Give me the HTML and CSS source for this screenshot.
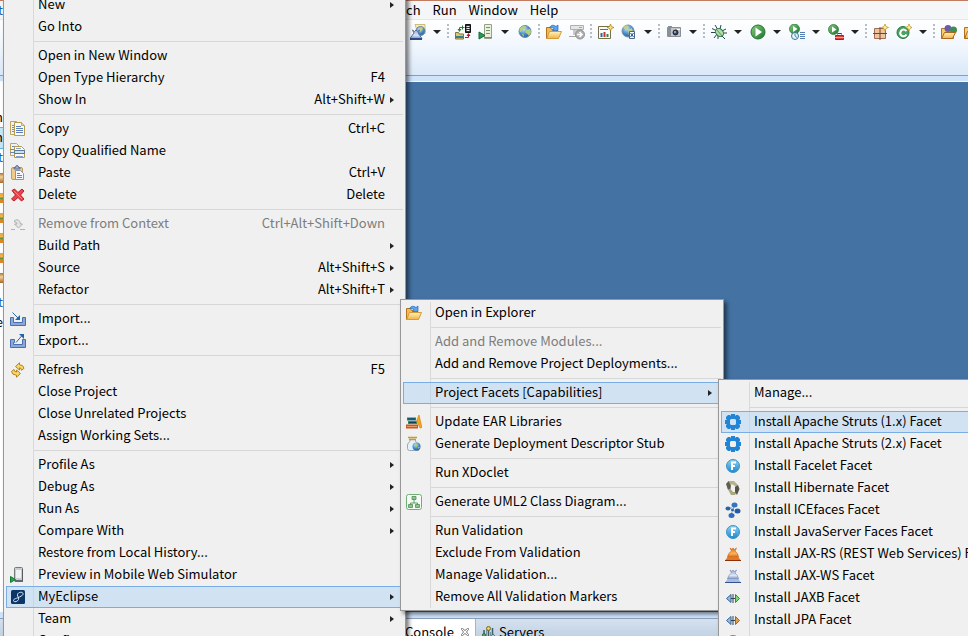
FILE: index.html
```html
<!DOCTYPE html>
<html lang="en">
<head>
<meta charset="utf-8">
<title>MyEclipse</title>
<link rel="stylesheet" href="styles.css">
</head>
<body>
<svg class="defs" aria-hidden="true">
  <defs>
    <linearGradient id="gold" x1="0" y1="0" x2="0" y2="1"><stop offset="0" stop-color="#fff3c0"/><stop offset="1" stop-color="#f2b240"/></linearGradient>
    <linearGradient id="ball" x1="0" y1="0" x2="0" y2="1"><stop offset="0" stop-color="#8ed4f3"/><stop offset="1" stop-color="#1c87cc"/></linearGradient>
    <radialGradient id="sea" cx=".4" cy=".3" r=".8"><stop offset="0" stop-color="#c5e5fa"/><stop offset=".5" stop-color="#4a93cf"/><stop offset="1" stop-color="#1d4f94"/></radialGradient>
    <linearGradient id="fire" x1="0" y1="0" x2="0" y2="1"><stop offset="0" stop-color="#d9701c"/><stop offset=".6" stop-color="#f9b65a"/><stop offset="1" stop-color="#d9701c"/></linearGradient>
    <linearGradient id="ice" x1="0" y1="0" x2="0" y2="1"><stop offset="0" stop-color="#8da3d0"/><stop offset=".6" stop-color="#dde7f6"/><stop offset="1" stop-color="#7f95c8"/></linearGradient>
    <linearGradient id="leaf" x1="0" y1="0" x2="1" y2="1"><stop offset="0" stop-color="#8acb80"/><stop offset="1" stop-color="#16762a"/></linearGradient>
    <symbol id="copy" viewBox="0 0 16 16"><path d="M.5.5h6l3 3v10h-9z" fill="#eef2f8" stroke="#bda65a"/><path d="M2 4.500h3M2 6.500h3M2 8.500h3M2 10.500h3" stroke="#7390c0"/><path d="M4.500 1.500h7l3 3v10h-10z" fill="#f8fafd" stroke="#b39a4d"/><path d="M11.500 1.500v3h3" fill="#e9d78f" stroke="#c4aa55"/><path d="M6 5.500h5M6 7.500h7M6 9.500h7M6 11.500h7" stroke="#5f7fb8"/></symbol>
    <symbol id="copyname" viewBox="0 0 16 16"><path d="M.5.500h6l3 3v9h-9z" fill="#eef2f8" stroke="#bda65a"/><path d="M2 3.500h4M0 6.500h9M0 9.500h9" stroke="#6e8aa8"/><path d="M4.500 3.500h7l3 3v8h-10z" fill="#f8fafd" stroke="#b39a4d"/><path d="M6 5.500h5M6 13.500h7" stroke="#8aa2c9"/><path d="M4.500 7.500h10v3h-10z" fill="#cde0f5" stroke="#5c7894"/></symbol>
    <symbol id="paste" viewBox="0 0 16 16"><rect x="1.500" y="2.500" width="11" height="12" rx="1.500" fill="#f0cb8c" stroke="#c99656"/><path d="M4 4V2.500h1.500Q5.500.500 7 .500t1.500 2H10V4z" fill="#9fb0c8" stroke="#5c718f"/><path d="M5.500 5.500h5l3 3v6h-8z" fill="#f7f9fd" stroke="#8896ad"/><path d="M7 8.500h3M7 10.500h5M7 12.500h5" stroke="#6583bb"/></symbol>
    <symbol id="delete" viewBox="0 0 16 16"><path d="M2 3.500 4.500 2 8 5.500 12 2l2 2-3.500 4 3.500 4-2.500 2L8 10.500 4 14l-2.500-2L5.500 8z" fill="#e8444a" stroke="#bd1c28" stroke-linejoin="round"/><path d="m4 4 8 8" stroke="#f7898a"/></symbol>
    <symbol id="removectx" viewBox="0 0 16 16"><path d="M1 13.500h4M10 13.500h5" stroke="#b2b2b2"/><path d="M4.500 4.500q5-2.500 6 3.500h2L8.500 12 4.500 8h2.500Q7 6 4.500 6z" fill="#e4e4e4" stroke="#b0b0b0"/></symbol>
    <symbol id="import" viewBox="0 0 16 16"><path d="M.5 6.500h3v5h9v-5h3v8H.5z" fill="#8aa9d8" stroke="#4a6fb0"/><path d="m2.500 1.500 6 6" stroke="#2a63a8" fill="none"/><path d="M10 4v5H5z" fill="#1d66a8"/></symbol>
    <symbol id="export" viewBox="0 0 16 16"><path d="M4.500 6.500h-4v8h15v-8h-3v5h-9v-2h1z" fill="#8aa9d8" stroke="#4a6fb0"/><path d="m6 9.500 6-7" stroke="#2a63a8" fill="none"/><path d="M9 1h5v5z" fill="#1d66a8"/></symbol>
    <symbol id="refresh" viewBox="0 0 16 16"><path d="M5.500 4.500 9.500.800v2q4 0 4.500 3.500l-2.500 2q0-2.500-2-2.500V8zM10.500 11.500l-4 3.700v-2Q2 13 1.500 9.500l2.500-2q.300 2.500 2.500 2.500V8z" fill="#f8d76c" stroke="#b5831c" stroke-linejoin="round"/></symbol>
    <symbol id="mobile" viewBox="0 0 16 16"><rect x="4.500" y=".5" width="8" height="14" rx="1" fill="#c9cdd0" stroke="#74797d"/><path d="M6 3h5v8H6z" fill="#f0f2f3"/><path d="M12.500 2v12" stroke="#565b60"/><path d="M5 13h8v2H5z" fill="#63686c"/><path d="m.5 9.500 5 3-5 3z" fill="#2ba04d" stroke="#157a34"/></symbol>
    <symbol id="myeclipse" viewBox="0 0 16 16"><rect x="1" y="1" width="14" height="14" rx="1.500" fill="#0b3667"/><path d="M13 4.500C12.500 2.500 8 3 7.500 5.500S9.500 8 8.500 10.500 3.500 13.500 3.500 11.500 7 9.500 9.500 8 13.500 6 13 4.500" fill="none" stroke="#dfe9f3"/></symbol>
    <symbol id="openfolder" viewBox="0 0 16 16"><path d="M.5 3.500h4l1 2h6v9H.5z" fill="#f0ba57" stroke="#b2731c"/><path d="M3.500 7.500h12l-3 7H.7z" fill="url(#gold)" stroke="#d99a35"/><path d="M3.500 3.500Q6-.5 10 2.500L12 1v5.500H6.500l1.500-2Q6 3 3.500 3.500z" fill="#5aa4ec" stroke="#2569bd" stroke-width=".7"/></symbol>
    <symbol id="books" viewBox="0 0 16 16"><path d="M1 3.500h9v3H1z" fill="#1f7a8c"/><path d="M2 7h9v3H2z" fill="#2c8f5b"/><path d="M0 10.500h12v4H0z" fill="#c75a24"/><path d="M2 5h7M3 8.500h7" stroke="#143f52"/><path d="M1 12.500h10" stroke="#e59a68"/><path d="m10.500 7 2.500-6 3 12.500-2 .5z" fill="#f3a51c" stroke="#d17c0b" stroke-width=".6"/></symbol>
    <symbol id="jar" viewBox="0 0 16 16"><path d="M4 3.500h5.500v2Q12.500 7 12.500 9v5.500h-9q-2 0-2-2V9Q1.500 7 4 5.500z" fill="#e7f1fa" stroke="#92aac4"/><path d="M2 1.500h9M3 3.500h7" stroke="#c79a2a" stroke-width="1.500"/><circle cx="10.500" cy="10.500" r="4" fill="url(#sea)"/><path d="m8.500 9 2.500-1.500.5 2-1.500 2zM12 11h2l-1.500 2z" fill="#b3c767"/></symbol>
    <symbol id="uml" viewBox="0 0 16 16"><rect x=".5" y=".5" width="15" height="15" rx="2" fill="#f5faf4" stroke="#72ad78"/><path d="M8 5v4M4.500 11V9h7v2" fill="none" stroke="#5b9e62"/><path d="M6 2.500h4v3H6zM2.500 10.500h4v3h-4zM9.500 10.500h4v3h-4z" fill="#8cc393" stroke="#4c9154" stroke-width=".8"/></symbol>
    <symbol id="gear" viewBox="0 0 16 16"><path fill-rule="evenodd" d="M3 1h2l1 1V0h4v2l1-1h2l2 2v2l-1 1h2v4h-2l1 1v2l-2 2h-2l-1-1v2H6v-2l-1 1H3l-2-2v-2l1-1H0V6h2L1 5V3zM6 5 5 6v4l1 1h4l1-1V6l-1-1z" fill="#2284d4"/></symbol>
    <symbol id="fball" viewBox="0 0 16 16"><circle cx="8" cy="8" r="6.500" fill="url(#ball)" stroke="#3c92c8"/><path d="M6 4.500h5M7 4v8M6 8h4" stroke="#fff" stroke-width="2" fill="none"/></symbol>
    <symbol id="hibernate" viewBox="0 0 16 16"><path d="M3.500 1H9l4 4-2 2-3-2.500H5z" fill="#b5b18a"/><path d="m1 4 2.500-3L6 5.500 5.500 9 3 10z" fill="#605d53"/><path d="m3 9.500 2.500-.500L8 12h4l-2 3H6z" fill="#aaa67e"/><path d="m10 7 3-2 1.500 4-2.500 6-2-3z" fill="#55534a"/></symbol>
    <symbol id="icefaces" viewBox="0 0 16 16"><path d="M3 6h4M9 3l-.5 4M10 8h4M6 13l1-3" stroke="#7ba4d4"/><ellipse cx="3" cy="6.500" rx="2.500" ry="2" fill="#2b62a8"/><ellipse cx="9.500" cy="3" rx="3" ry="2.500" fill="#3474bf"/><circle cx="7.500" cy="8" r="1.500" fill="#2b62a8"/><ellipse cx="12.500" cy="9" rx="3" ry="2.500" fill="#245ba5"/><ellipse cx="6.500" cy="13.500" rx="3" ry="2.500" fill="#2f6dba"/></symbol>
    <symbol id="bagfire" viewBox="0 0 16 16"><path d="m5 2 2 1.500L8 2l1.500 1.500L11.500 2 10 5q3 2 3.500 6h-11Q3 7 6.500 5z" fill="url(#fire)" stroke="#c65f18" stroke-width=".6"/><path d="M.5 14 2.500 11h11l2 3z" fill="#e07a26"/><path d="M0 14.500h16" stroke="#8d2f08"/></symbol>
    <symbol id="bagice" viewBox="0 0 16 16"><path d="m5 2 2 1.500L8 2l1.500 1.500L11.500 2 10 5q3 2 3.500 6h-11Q3 7 6.500 5z" fill="url(#ice)" stroke="#7488b5" stroke-width=".6"/><path d="M.5 14 2.500 11h11l2 3z" fill="#a9bbdf"/><path d="M0 14.500h16" stroke="#33518f"/></symbol>
    <symbol id="jaxb" viewBox="0 0 16 16"><path d="M6 4.500v8l-4.500-4z" fill="#8fbbe8" stroke="#3f6493"/><path d="M8 4v9M6 8.500h5" stroke="#33424f"/><path d="M10.500 4.500v8l4-4z" fill="#7bd874" stroke="#2a9134"/></symbol>
    <symbol id="jpa" viewBox="0 0 16 16"><path d="M6 4.500v8l-4.500-4z" fill="#8fbbe8" stroke="#3f6493"/><path d="M8 4v9M6 8.500h5" stroke="#33424f"/><path d="M10.500 4.500v8l4-4z" fill="#e0a050" stroke="#a8651c"/></symbol>
    <symbol id="globe" viewBox="0 0 16 16"><circle cx="8" cy="7.500" r="6" fill="url(#sea)" stroke="#6b8fae"/><path d="m3 4 4-2.500 2 1L7.500 5 5 6 4 8.500 2.500 7zM9 6l4-1 1 3-2 4-2-2.500L8.500 9zM4.500 9 7 11l-.5 2z" fill="#b9cf7a"/></symbol>
    <symbol id="globejar" viewBox="0 0 16 16"><path d="M5 .5h10v9H8z" fill="#f6ecc0" stroke="#c4ad5c" stroke-width=".8"/><circle cx="10.500" cy="7" r="4.500" fill="url(#sea)" stroke="#6c88a4"/><path d="m9 4 3-1 1 2-3 3z" fill="#c5cf7a"/><path d="m2.500 6 2 1.500L6 6l1.500 1.500L9.500 6 8 9l4 5.500H0L4 9z" fill="url(#ice)" stroke="#56719f"/><path d="M0 15h12" stroke="#284c83" stroke-width="2"/></symbol>
    <symbol id="deploy" viewBox="0 0 16 16"><path d="M10.500.5h5v8h-5z" fill="#333" stroke="#111"/><path d="M11.500 2.500h3M11.500 4.500h3M11.500 6.500h3" stroke="#eee"/><path d="M4.500 6V3.500h5M7.500 1.500v4" stroke="#2f7d37" fill="none"/><path d="M2.500 5h4L4.500 8z" fill="#2f7d37"/><path d="M.5 8.500h3l1 1.500h4v5h-8z" fill="#e2c568" stroke="#7d7742"/><path d="M0 13h8" stroke="#347e8d" stroke-width="2"/><path d="M10 13.500h3.500V11" stroke="#ab1d24" fill="none"/><path d="m13.500 9 2 3h-4z" fill="#ab1d24"/></symbol>
    <symbol id="runserver" viewBox="0 0 16 16"><path d="M6.500.5h7v14h-7z" fill="#ecefda" stroke="#96a28a"/><path d="M8 3.500h4M8 6.500h4M8 9.500h4M6 13.500h8" stroke="#6f9670"/><path d="m1 8 6 3.500-6 3.500z" fill="#2a9a52" stroke="#166c33"/></symbol>
    <symbol id="serverarrow" viewBox="0 0 16 16"><path d="M1.500 1.500h13v4h-13z" fill="#e6e6e6" stroke="#b0b0b0"/><path d="M4 6h9v5H4z" fill="#c9c9c9"/><path d="M0 12.500h8M10 3.500h3" stroke="#a5a5a5"/><circle cx="11" cy="10.500" r="4.500" fill="#b0b0b0" stroke="#909090"/><path d="M8 10.500h5M10.500 8l2.500 2.500-2.500 2.500" stroke="#fff" fill="none" stroke-width="1.500"/></symbol>
    <symbol id="report" viewBox="0 0 16 16"><path d="M.5 2.500h12v12H.5z" fill="#f8fbfd" stroke="#766f46"/><path d="M2 5.500h8" stroke="#437c83"/><path d="M3.500 9v4" stroke="#2b68a4" stroke-width="2"/><path d="M6.500 8v5" stroke="#c0392b" stroke-width="2"/><path d="M9.500 10v3" stroke="#27894b" stroke-width="2"/><path d="m12.500 0 1 2.500L16 3.500l-2.500 1-1 2.500-1-2.500L9 3.500l2.500-1z" fill="#f8df8a" stroke="#a77c10" stroke-width=".7"/></symbol>
    <symbol id="globedoc" viewBox="0 0 16 16"><circle cx="7" cy="7" r="6" fill="url(#sea)" stroke="#7592ad"/><path d="m2 3 4-2 2 2-3 3zM7 6l4-2 1 4-4 4z" fill="#c7cf86"/><path d="M8.500 7.500h5v7h-5z" fill="#f4f8fc" stroke="#4d6688"/><path d="m9.500 9 3 4M12.500 9l-3 4" stroke="#284f87"/></symbol>
    <symbol id="camera" viewBox="0 0 16 16"><path d="M1.500 3.500h13v9h-13z" fill="#c2c6cb" stroke="#8b9096"/><path d="M2 2h4v2H2zM2 4h3v8H2z" fill="#8a9097"/><path d="M11 5.500h3" stroke="#f3f3f3"/><circle cx="9.500" cy="8.500" r="2.500" fill="#2c4a72" stroke="#222"/><circle cx="9" cy="8" r="1" fill="#8fc0ee"/></symbol>
    <symbol id="bug" viewBox="0 0 16 16"><path d="M1 4.500l4 2M4 1l2.500 4M10 1 9 5M0 8.500h5M3 14l3-4M7 15v-3M11 7l4-2M12 9h4M11 12l3 3" stroke="#27474b" fill="none"/><ellipse cx="8.500" cy="8.500" rx="3.500" ry="4.500" transform="rotate(-42 8.500 8.500)" fill="#b5dba0" stroke="#287457"/><path d="m6 6 5 6" stroke="#4c966b"/></symbol>
    <symbol id="run" viewBox="0 0 16 16"><circle cx="8" cy="8" r="7" fill="url(#leaf)" stroke="#1d7330"/><path d="m5.500 3.500 6.500 4.500-6.500 4.500z" fill="#fff"/></symbol>
    <symbol id="runhist" viewBox="0 0 16 16"><circle cx="5.500" cy="5" r="5" fill="url(#leaf)" stroke="#1d7330" stroke-width=".7"/><path d="m4 2 4.500 3L4 8z" fill="#fff"/><circle cx="6" cy="12" r="3.500" fill="#e9f5fc" stroke="#2f7898"/><path d="M6 9.500V12l2 1.500M11 8.500h5M11 10.500h5M11 12.500h5M11 14.500h5" stroke="#557fb3" fill="none"/></symbol>
    <symbol id="runext" viewBox="0 0 16 16"><circle cx="5.500" cy="5.500" r="5" fill="url(#leaf)" stroke="#1d7330" stroke-width=".7"/><path d="m4 2.500 4.500 3L4 8.500z" fill="#fff"/><path d="M9.500 10.500V9.500h4v1" stroke="#9a2320" fill="none"/><path d="M7.500 11.500h8v4h-8z" fill="#e0443c" stroke="#a31f1b"/><path d="M7 13.500h9" stroke="#f8a19a"/></symbol>
    <symbol id="pkg" viewBox="0 0 16 16"><path d="M1.500 4.500h11v10h-11z" fill="#e9c6a0" stroke="#a46c4e"/><path d="M7 3v13M0 9.500h14" stroke="#7e4029"/><path d="m12 0 1 2.500L15.500 3.500 13 4.500 12 7l-1-2.500-2.500-1 2.500-1z" fill="#fff2a8" stroke="#bb9014" stroke-width=".7"/></symbol>
    <symbol id="class" viewBox="0 0 16 16"><circle cx="7" cy="8.500" r="6" fill="#4ba263" stroke="#257b3e"/><path d="M10.500 7Q7 4 5 7t1 5q3 1 4.500-1.500" stroke="#fff" stroke-width="2" fill="none"/><path d="m13 0 1 2.500 2 1-2 1L13 7l-1-2.500-2.500-1 2.500-1z" fill="#fff2a8" stroke="#bb9014" stroke-width=".7"/></symbol>
    <symbol id="types" viewBox="0 0 16 16"><path d="M.5 4.500h4l1 2h7v8H.5z" fill="#f4cd72" stroke="#b2731c"/><circle cx="7" cy="4.500" r="3.500" fill="#6c5ba8"/><circle cx="12.500" cy="6" r="3.500" fill="#3d8f51"/><path d="M3.500 8.500h11l-3 6H.7z" fill="url(#gold)" stroke="#a9681b"/></symbol>
    <symbol id="folder" viewBox="0 0 16 16"><path d="M.5 3.500h5l1 2h6v9H.5z" fill="#f4cd72" stroke="#b2731c"/><path d="M3.500 7.500h12l-3 7H.7z" fill="url(#gold)" stroke="#a9681b"/></symbol>
    <symbol id="servers" viewBox="0 0 16 16"><path d="M3 6v8M7.500 3v9M11.500 4v10" stroke="#36606c" stroke-width="1.500"/><path d="M5.500 6v8M9.500 8v6" stroke="#7993a3"/><circle cx="3" cy="11" r="1.500" fill="#6bb35e" stroke="#2e6a35"/><circle cx="7.500" cy="4.500" r="2" fill="#f1cf52" stroke="#81651d"/><circle cx="12" cy="12" r="1.500" fill="#d5e4ef" stroke="#4e6f88"/></symbol>
  </defs>
</svg>

<div class="workbench">
  <nav class="menubar" aria-label="Main menu">
    <span class="peek peek-blue">t</span>
    <button>ch</button><button>Run</button><button>Window</button><button>Help</button>
  </nav>
  <div class="toolbar">
    <button class="tool" aria-label="Web service"><svg><use href="#globejar"/></svg></button><button class="drop" aria-label="More"></button><i class="grip"></i>
    <button class="tool" aria-label="Deploy"><svg><use href="#deploy"/></svg></button>
    <button class="tool" aria-label="Run server"><svg><use href="#runserver"/></svg></button><button class="drop" aria-label="More"></button>
    <button class="tool" aria-label="Browser"><svg><use href="#globe"/></svg></button><i class="grip"></i>
    <button class="tool" aria-label="Open in Explorer"><svg><use href="#openfolder"/></svg></button>
    <button class="tool" aria-label="Server"><svg><use href="#serverarrow"/></svg></button><i class="grip"></i>
    <button class="tool" aria-label="New report"><svg><use href="#report"/></svg></button>
    <button class="tool" aria-label="Web page"><svg><use href="#globedoc"/></svg></button><button class="drop" aria-label="More"></button><i class="grip"></i>
    <button class="tool" aria-label="Snapshot"><svg><use href="#camera"/></svg></button><button class="drop" aria-label="More"></button><i class="grip"></i>
    <button class="tool" aria-label="Debug"><svg><use href="#bug"/></svg></button><button class="drop" aria-label="More"></button>
    <button class="tool" aria-label="Run"><svg><use href="#run"/></svg></button><button class="drop" aria-label="More"></button>
    <button class="tool" aria-label="Run history"><svg><use href="#runhist"/></svg></button><button class="drop" aria-label="More"></button>
    <button class="tool" aria-label="External tools"><svg><use href="#runext"/></svg></button><button class="drop" aria-label="More"></button><i class="grip"></i>
    <button class="tool" aria-label="New package"><svg><use href="#pkg"/></svg></button>
    <button class="tool" aria-label="New class"><svg><use href="#class"/></svg></button><button class="drop" aria-label="More"></button><i class="grip"></i>
    <button class="tool" aria-label="Open type"><svg><use href="#types"/></svg></button>
    <button class="tool" aria-label="Open folder"><svg><use href="#folder"/></svg></button>
  </div>
  <div class="main">
    <div class="explorer">
      <span class="peek">n</span><span class="peek peek-on">n</span><span class="peek peek-blue">t</span>
      <i class="chip chip-pkg"></i><i class="chip"></i><i class="chip"></i><i class="chip"></i><i class="chip"></i><i class="chip chip-pkg"></i>
      <span class="peek peek-blue">t</span><span class="peek">e</span>
    </div>
    <div class="editor"></div>
  </div>
  <div class="panel">
    <div class="tab tab-on">Console <svg class="close" viewBox="0 0 10 10"><path d="M1.500 1.500h1l2.500 2 2.500-2h1v1l-2 2.500 2 2.500v1h-1L5 6.500l-2.500 2h-1v-1l2-2.500-2-2.500z" fill="#fff" stroke="#777"/></svg></div>
    <div class="tab"><svg><use href="#servers"/></svg>Servers</div>
  </div>
</div>

<ul class="menu menu-context">
  <li><button>New<i class="more"></i></button></li>
  <li><button>Go Into</button></li>
  <li class="line"></li>
  <li><button>Open in New Window</button></li>
  <li><button>Open Type Hierarchy<kbd>F4</kbd></button></li>
  <li><button>Show In<kbd>Alt+Shift+W</kbd><i class="more"></i></button></li>
  <li class="line"></li>
  <li><button><svg><use href="#copy"/></svg>Copy<kbd>Ctrl+C</kbd></button></li>
  <li><button><svg><use href="#copyname"/></svg>Copy Qualified Name</button></li>
  <li><button><svg><use href="#paste"/></svg>Paste<kbd>Ctrl+V</kbd></button></li>
  <li><button><svg><use href="#delete"/></svg>Delete<kbd>Delete</kbd></button></li>
  <li class="line"></li>
  <li><button disabled><svg><use href="#removectx"/></svg>Remove from Context<kbd>Ctrl+Alt+Shift+Down</kbd></button></li>
  <li><button>Build Path<i class="more"></i></button></li>
  <li><button>Source<kbd>Alt+Shift+S</kbd><i class="more"></i></button></li>
  <li><button>Refactor<kbd>Alt+Shift+T</kbd><i class="more"></i></button></li>
  <li class="line"></li>
  <li><button><svg><use href="#import"/></svg>Import...</button></li>
  <li><button><svg><use href="#export"/></svg>Export...</button></li>
  <li class="line"></li>
  <li><button><svg><use href="#refresh"/></svg>Refresh<kbd>F5</kbd></button></li>
  <li><button>Close Project</button></li>
  <li><button>Close Unrelated Projects</button></li>
  <li><button>Assign Working Sets...</button></li>
  <li class="line"></li>
  <li><button>Profile As<i class="more"></i></button></li>
  <li><button>Debug As<i class="more"></i></button></li>
  <li><button>Run As<i class="more"></i></button></li>
  <li><button>Compare With<i class="more"></i></button></li>
  <li><button>Restore from Local History...</button></li>
  <li><button><svg><use href="#mobile"/></svg>Preview in Mobile Web Simulator</button></li>
  <li><button class="on"><svg><use href="#myeclipse"/></svg>MyEclipse<i class="more"></i></button></li>
  <li><button>Team<i class="more"></i></button></li>
  <li><button>Configure</button></li>
</ul>

<ul class="menu menu-myeclipse">
  <li><button><svg><use href="#openfolder"/></svg>Open in Explorer</button></li>
  <li class="line"></li>
  <li><button disabled>Add and Remove Modules...</button></li>
  <li><button>Add and Remove Project Deployments...</button></li>
  <li class="line"></li>
  <li><button class="on">Project Facets [Capabilities]<i class="more"></i></button></li>
  <li class="line"></li>
  <li><button><svg><use href="#books"/></svg>Update EAR Libraries</button></li>
  <li><button><svg><use href="#jar"/></svg>Generate Deployment Descriptor Stub</button></li>
  <li class="line"></li>
  <li><button>Run XDoclet</button></li>
  <li class="line"></li>
  <li><button><svg><use href="#uml"/></svg>Generate UML2 Class Diagram...</button></li>
  <li class="line"></li>
  <li><button>Run Validation</button></li>
  <li><button>Exclude From Validation</button></li>
  <li><button>Manage Validation...</button></li>
  <li><button>Remove All Validation Markers</button></li>
</ul>

<ul class="menu menu-facets">
  <li><button>Manage...</button></li>
  <li class="line"></li>
  <li><button class="on"><svg><use href="#gear"/></svg>Install Apache Struts (1.x) Facet</button></li>
  <li><button><svg><use href="#gear"/></svg>Install Apache Struts (2.x) Facet</button></li>
  <li><button><svg><use href="#fball"/></svg>Install Facelet Facet</button></li>
  <li><button><svg><use href="#hibernate"/></svg>Install Hibernate Facet</button></li>
  <li><button><svg><use href="#icefaces"/></svg>Install ICEfaces Facet</button></li>
  <li><button><svg><use href="#fball"/></svg>Install JavaServer Faces Facet</button></li>
  <li><button><svg><use href="#bagfire"/></svg>Install JAX-RS (REST Web Services) Facet</button></li>
  <li><button><svg><use href="#bagice"/></svg>Install JAX-WS Facet</button></li>
  <li><button><svg><use href="#jaxb"/></svg>Install JAXB Facet</button></li>
  <li><button><svg><use href="#jpa"/></svg>Install JPA Facet</button></li>
  <li><button aria-label="Install facet"><svg><use href="#fball"/></svg></button></li>
</ul>
</body>
</html>
```
FILE: styles.css
```css
* { box-sizing: border-box; }
html, body { height: 100%; overflow: hidden; }
body {
  margin: 0;
  position: relative;
  font: 13px/20px "Noto Sans CJK SC", "Noto Sans", sans-serif;
  color: #000;
}
button { font: inherit; color: inherit; background: none; border: 0; padding: 0; }
svg { width: 16px; height: 16px; flex: none; }
.defs { position: absolute; width: 0; height: 0; }

.workbench { height: 100%; display: flex; flex-direction: column; background: #cfe3fb; }
.menubar {
  position: relative;
  display: flex;
  align-items: flex-start;
  gap: 12px;
  height: 20px;
  padding-left: 406px;
  line-height: 18px;
  border-top: 1px solid #c27c62;
  border-bottom: 1px solid #e6e8ec;
  background: #f5f6f8;
}
.menubar .peek { position: absolute; left: 0; top: 0; }

.toolbar {
  display: flex;
  align-items: flex-start;
  height: 56px;
  padding: 4px 0 0 406px;
  overflow: hidden;
  background: linear-gradient(#fff, #f2f7fe 45%, #dae8f8);
  border-bottom: 1px solid #8d9db2;
}
.tool { flex: none; width: 23px; height: 16px; display: flex; justify-content: center; }
.drop { flex: none; width: 16px; height: 16px; display: flex; align-items: center; justify-content: center; }
.drop::before { content: ""; border: 4px solid transparent; border-top-color: #222; border-bottom: 0; }
.grip {
  flex: none;
  width: 6px;
  height: 16px;
  background: repeating-linear-gradient(#b9bcc2 0 2px, transparent 2px 4px) center / 2px 100% no-repeat;
}

.main {
  flex: 1;
  display: flex;
  margin-top: 5px;
  border-top: 1px solid #f4f8fd;
}
.explorer {
  width: 400px;
  padding-top: 26px;
  background: #fff;
}
.peek { display: flex; justify-content: flex-end; width: 3px; height: 20px; overflow: hidden; line-height: 18px; }
.peek-blue { color: #1a5fb0; }
.peek-on { background: #c4e6f5; outline: 1px solid #5eb5dc; }
.chip { display: block; width: 4px; height: 10px; margin: 5px 0 10px; background: linear-gradient(#e9a13b, #f5b94e 40%, #3c9a51 50%, #e08a26 70%); }
.explorer .chip + .chip { margin-top: 10px; }
.chip-pkg { background: linear-gradient(#b0743a, #f3d49a 40%, #a8692c); }
.editor { flex: 1; background: #4472a3; }

.panel {
  display: flex;
  height: 18px;
  margin-top: 6px;
  padding-left: 400px;
  overflow: hidden;
  border-top: 1px solid #8aa0bb;
  background: linear-gradient(#d5e1ee, #c3d3e5);
}
.tab { display: flex; align-items: center; height: 26px; gap: 2px; padding: 0 5px; }
.tab-on { gap: 6px; background: #fff; border-right: 1px solid #a5b5c9; }
.close { width: 10px; height: 10px; }

.menu {
  --gutter: 30px;
  position: absolute;
  margin: 0;
  padding: 2px;
  list-style: none;
  border: 1px solid #979797;
  background:
    linear-gradient(#d9d9d9, #d9d9d9) calc(var(--gutter) - 1px) 2px / 1px calc(100% - 4px) no-repeat,
    #f0f0f0;
  box-shadow: 3px 3px 4px rgba(0, 0, 0, .5);
}
.menu-context { left: 3px; top: -9px; width: 403px; }
.menu-myeclipse { left: 400px; top: 299px; width: 324px; }
.menu-facets { --gutter: 31px; left: 718px; top: 379px; width: 324px; }
.menu button {
  position: relative;
  display: flex;
  align-items: center;
  width: 100%;
  height: 22px;
  padding: 0 17px 2px calc(var(--gutter) + 1px);
  border: 1px solid transparent;
  text-align: left;
  white-space: nowrap;
}
.menu button:disabled { color: #7d7d7d; }
.menu .on { border-color: #78aee5; background: rgba(178, 214, 246, .5); }
.menu svg { position: absolute; left: 3px; top: 2px; }
.menu-myeclipse svg { left: 2px; }
.menu kbd { font: inherit; margin-left: auto; }
.menu .more {
  position: absolute;
  right: 8px;
  top: 7px;
  border: 3px solid transparent;
  border-left: 4px solid #222;
  border-right: 0;
}
.menu .line {
  height: 7px;
  margin-left: calc(var(--gutter) - 2px);
  background: linear-gradient(#d7d7d7, #d7d7d7) 0 3px / 100% 1px no-repeat;
}
```
